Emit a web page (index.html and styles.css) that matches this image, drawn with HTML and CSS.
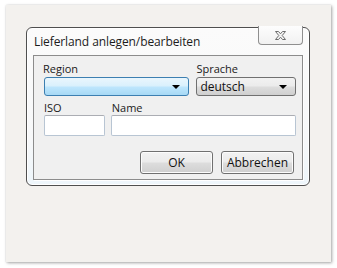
FILE: index.html
```html
<!DOCTYPE html>
<html>
<head>
<meta charset="utf-8">
<link rel="stylesheet" href="styles.css">
</head>
<body>
<div class="paper">
  <div class="dialog">
    <div class="titlebar">Lieferland anlegen/bearbeiten</div>
    <div class="close">
      <svg width="13" height="11" viewBox="0 0 13 11">
        <path d="M1.5 1.5 H4.5 L6.5 3.8 L8.5 1.5 H11.5 L8.2 5.5 L11.5 9.5 H8.5 L6.5 7.2 L4.5 9.5 H1.5 L4.8 5.5 Z" fill="#f4f4f4" stroke="#6d6d6d" stroke-width="1" stroke-linejoin="round"/>
      </svg>
    </div>
    <div class="panel">
      <div class="row">
        <div class="field f-region">
          <span class="label">Region</span>
          <div class="combo combo-active"><span class="value"></span><span class="arrow"></span></div>
        </div>
        <div class="field f-lang">
          <span class="label">Sprache</span>
          <div class="combo"><span class="value">deutsch</span><span class="arrow"></span></div>
        </div>
      </div>
      <div class="row row2">
        <div class="field f-iso">
          <span class="label">ISO</span>
          <div class="input"></div>
        </div>
        <div class="field f-name">
          <span class="label">Name</span>
          <div class="input"></div>
        </div>
      </div>
      <div class="buttons">
        <div class="btn">OK</div>
        <div class="btn">Abbrechen</div>
      </div>
    </div>
  </div>
</div>
</body>
</html>
```

FILE: styles.css
```css
html, body {
  margin: 0;
  padding: 0;
  background: #ffffff;
}
body {
  width: 337px;
  height: 268px;
  font-family: "Open Sans", "Noto Sans", "DejaVu Sans", sans-serif;
  font-size: 11px;
  color: #1a1a1a;
}
.paper {
  margin: 5px 0 0 6px;
  width: 325px;
  height: 257px;
  background: #f3f1ee;
  box-shadow: 1px 1px 3px rgba(0,0,0,0.35), 0 0 1px rgba(0,0,0,0.15);
  padding: 22px 0 0 20px;
  box-sizing: border-box;
}
.dialog {
  position: relative;
  width: 284px;
  height: 159px;
  box-sizing: border-box;
  border: 1px solid #4f4f4f;
  border-radius: 6px;
  background: linear-gradient(180deg, #fbfbfb 0%, #f7f8f9 70%, #eef6fb 100%);
  box-shadow: inset 0 0 0 1px #ffffff;
  padding: 0 6px 0 6px;
}
.titlebar {
  height: 27px;
  line-height: 28px;
  padding-left: 1px;
  font-size: 12px;
  color: #1c1c1c;
  letter-spacing: -0.1px;
}
.close {
  position: absolute;
  top: -2px;
  right: 6px;
  width: 45px;
  height: 19px;
  box-sizing: border-box;
  border: 1px solid #8f8f8f;
  border-top: none;
  border-radius: 0 0 4px 4px;
  background: linear-gradient(180deg, #fdfdfd, #f1f1f1);
  display: flex;
  align-items: center;
  justify-content: center;
  padding-top: 1px;
}
.panel {
  width: 270px;
  height: 125px;
  box-sizing: border-box;
  border: 1px solid #8c8c8c;
  background: #f0f0f0;
  padding: 4px 6px 0 9px;
  box-shadow: 1px 1px 0 #ffffff;
}
.row {
  display: flex;
  gap: 7px;
}
.row2 {
  margin-top: 3px;
  gap: 6px;
}
.field {
  display: flex;
  flex-direction: column;
}
.label {
  display: block;
  height: 16px;
  line-height: 18px;
  color: #1a1a1a;
}
.f-region { width: 147px; }
.f-lang { width: 100px; }
.f-iso { width: 62px; }
.f-name { width: 186px; }
.f-iso .label, .f-name .label { padding-left: 1px; }
.combo {
  margin: 1px 0 0 1px;
  height: 19px;
  box-sizing: border-box;
  border: 1px solid #707070;
  border-radius: 3px;
  background: linear-gradient(180deg, #f2f2f2 0%, #ebebeb 48%, #dddddd 52%, #cfcfcf 100%);
  display: flex;
  align-items: center;
  justify-content: space-between;
  padding: 0 8px 0 3px;
}
.f-lang .combo { margin-left: 0; }
.combo-active {
  border-color: #3c7fb1;
  background: linear-gradient(180deg, #eaf6fd 0%, #d9f0fc 48%, #bee6fd 52%, #a7d9f5 100%);
}
.value {
  line-height: 17px;
  font-size: 12px;
  color: #111;
}
.arrow {
  width: 0;
  height: 0;
  border-left: 4px solid transparent;
  border-right: 4px solid transparent;
  border-top: 4px solid #000;
  margin-top: 1px;
}
.input {
  margin: 0 0 0 1px;
  height: 21px;
  box-sizing: border-box;
  border: 1px solid #b8c5d3;
  border-top-color: #abadb3;
  border-radius: 2px;
  background: #ffffff;
}
.f-name .input { margin-left: 0; }
.buttons {
  display: flex;
  justify-content: flex-end;
  gap: 8px;
  margin-top: 15px;
  padding-right: 2px;
}
.btn {
  width: 73px;
  height: 23px;
  box-sizing: border-box;
  border: 1px solid #707070;
  border-radius: 3px;
  background: linear-gradient(180deg, #f2f2f2 0%, #ebebeb 48%, #dddddd 52%, #cfcfcf 100%);
  box-shadow: inset 0 0 0 1px #fcfcfc;
  text-align: center;
  line-height: 22px;
  font-size: 12px;
  color: #111;
}
```
